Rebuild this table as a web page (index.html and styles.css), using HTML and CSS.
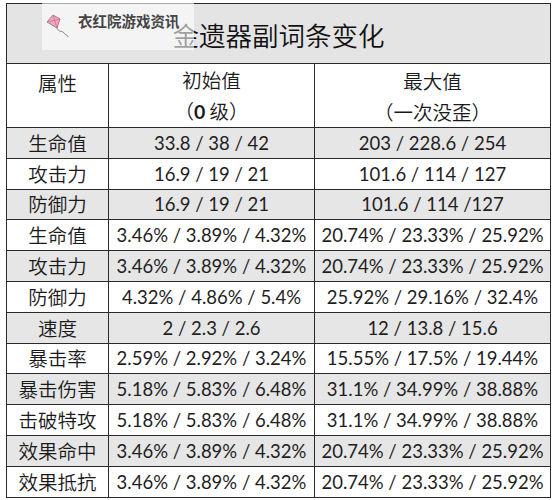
FILE: index.html
```html
<!DOCTYPE html>
<html lang="zh-CN">
<head>
<meta charset="utf-8">
<title>金遗器副词条变化</title>
<link rel="stylesheet" href="styles.css">
</head>
<body>
<div class="wrap">
  <table class="relic">
    <colgroup>
      <col class="c1"><col class="c2"><col class="c3">
    </colgroup>
    <tr class="title-row"><td colspan="3">金遗器副词条变化</td></tr>
    <tr class="head-row">
      <td class="top">属性</td>
      <td>初始值<br>（<b>0</b> 级）</td>
      <td>最大值<br>（一次没歪）</td>
    </tr>
    <tr class="g"><td>生命值</td><td>33.8 / 38 / 42</td><td>203 / 228.6 / 254</td></tr>
    <tr><td>攻击力</td><td>16.9 / 19 / 21</td><td>101.6 / 114 / 127</td></tr>
    <tr class="g"><td>防御力</td><td>16.9 / 19 / 21</td><td>101.6 / 114 /127</td></tr>
    <tr><td>生命值</td><td>3.46% / 3.89% / 4.32%</td><td>20.74% / 23.33% / 25.92%</td></tr>
    <tr class="g"><td>攻击力</td><td>3.46% / 3.89% / 4.32%</td><td>20.74% / 23.33% / 25.92%</td></tr>
    <tr><td>防御力</td><td>4.32% / 4.86% / 5.4%</td><td>25.92% / 29.16% / 32.4%</td></tr>
    <tr class="g"><td>速度</td><td>2 / 2.3 / 2.6</td><td>12 / 13.8 / 15.6</td></tr>
    <tr><td>暴击率</td><td>2.59% / 2.92% / 3.24%</td><td>15.55% / 17.5% / 19.44%</td></tr>
    <tr class="g"><td>暴击伤害</td><td>5.18% / 5.83% / 6.48%</td><td>31.1% / 34.99% / 38.88%</td></tr>
    <tr><td>击破特攻</td><td>5.18% / 5.83% / 6.48%</td><td>31.1% / 34.99% / 38.88%</td></tr>
    <tr class="g"><td>效果命中</td><td>3.46% / 3.89% / 4.32%</td><td>20.74% / 23.33% / 25.92%</td></tr>
    <tr><td>效果抵抗</td><td>3.46% / 3.89% / 4.32%</td><td>20.74% / 23.33% / 25.92%</td></tr>
  </table>
  <div class="watermark">
    <svg class="kite" width="28" height="28" viewBox="0 0 28 28">
      <path d="M2 9 L8 2 L15 6 L12 15 Z" fill="#eba9bf" stroke="#c5708e" stroke-width="1"/>
      <path d="M2 9 L15 6 M8 2 L12 15" stroke="#c5708e" stroke-width="0.8" fill="none"/>
      <path d="M12 15 C14 20 17 17 19 20 C21 23 22 21 23 24" stroke="#666" stroke-width="0.8" fill="none"/>
    </svg>
    <span class="wm-text">衣红院游戏资讯</span>
  </div>
</div>
</body>
</html>
```
FILE: styles.css
```css
html, body {
  margin: 0;
  padding: 0;
  background: #ffffff;
}

.wrap {
  position: relative;
  padding: 3px 0 0 6px;
}

.relic {
  border-collapse: collapse;
  width: 544px;
  table-layout: fixed;
  font-family: "Lato", "Noto Sans CJK SC", sans-serif;
  font-size: 18.5px;
  color: #1e1e1e;
}

.c1 { width: 102px; }
.c2 { width: 206px; }
.c3 { width: 236px; }

.relic td {
  border: 1px solid #2a2a2a;
  text-align: center;
  vertical-align: middle;
  padding: 0;
  height: 29.8px;
  line-height: 22px;
  white-space: nowrap;
}

.relic td:first-child {
  font-family: "Noto Sans CJK SC", sans-serif;
  font-weight: 350;
  font-size: 19.5px;
  color: #1a1a1a;
}

.relic tr.g td {
  background: #e6e6e6;
}

.relic .title-row td {
  height: 60px;
  background: #e4e4e4;
  font-family: "Noto Sans CJK SC", sans-serif;
  font-weight: 350;
  font-size: 26.5px;
  color: #111;
  padding: 2px 0 0 0;
  box-sizing: border-box;
}

.relic .head-row td {
  height: 60px;
  line-height: 31px;
  font-family: "Noto Sans CJK SC", sans-serif;
  font-weight: 350;
  font-size: 19.5px;
  color: #1a1a1a;
}

.relic .head-row td.top {
  vertical-align: top;
  padding-top: 3px;
}

.head-row b {
  font-family: "Lato", sans-serif;
  font-weight: 700;
}

.watermark {
  position: absolute;
  left: 42px;
  top: 3px;
  width: 152px;
  height: 47px;
  background: rgba(255, 255, 255, 0.6);
  display: flex;
  align-items: flex-start;
  padding-top: 8px;
  box-sizing: border-box;
}

.kite {
  margin-left: 3px;
  margin-top: 2px;
  flex: none;
}

.wm-text {
  margin-left: 5px;
  font-family: "Noto Sans CJK SC", sans-serif;
  font-weight: 700;
  font-size: 14.5px;
  line-height: 20px;
  color: #444;
  white-space: nowrap;
}
```
